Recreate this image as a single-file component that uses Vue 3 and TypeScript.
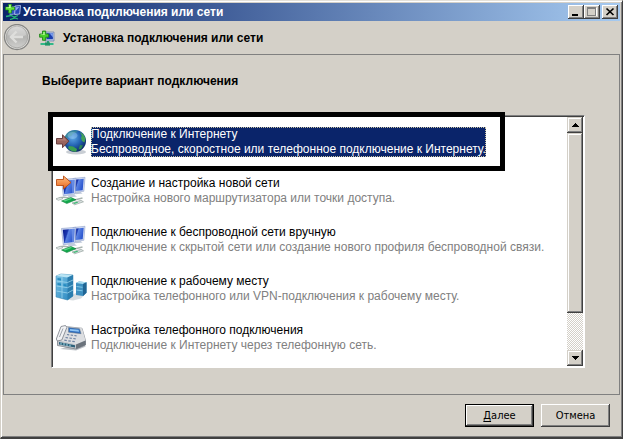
<script setup lang="ts">
import { ref } from 'vue'

interface Option {
  id: string
  icon: 'globe' | 'create' | 'wireless' | 'work' | 'phone'
  title: string
  note: string
}

const heading = 'Установка подключения или сети'

const options: Option[] = [
  { id: 'internet', icon: 'globe', title: 'Подключение к Интернету', note: 'Беспроводное, скоростное или телефонное подключение к Интернету.' },
  { id: 'network', icon: 'create', title: 'Создание и настройка новой сети', note: 'Настройка нового маршрутизатора или точки доступа.' },
  { id: 'wireless', icon: 'wireless', title: 'Подключение к беспроводной сети вручную', note: 'Подключение к скрытой сети или создание нового профиля беспроводной связи.' },
  { id: 'work', icon: 'work', title: 'Подключение к рабочему месту', note: 'Настройка телефонного или VPN-подключения к рабочему месту.' },
  { id: 'dialup', icon: 'phone', title: 'Настройка телефонного подключения', note: 'Подключение к Интернету через телефонную сеть.' },
]

const selected = ref('internet')
</script>

<template>
  <div class="window">
    <svg class="defs" width="0" height="0" aria-hidden="true">
      <defs>
        <linearGradient id="screen" x1="0" y1="0" x2="1" y2="0.4">
          <stop offset="0" stop-color="#0a1c8c" />
          <stop offset="0.4" stop-color="#1a36b0" />
          <stop offset="0.5" stop-color="#5a82e2" />
          <stop offset="1" stop-color="#2a55cf" />
        </linearGradient>
        <radialGradient id="ocean" cx="0.4" cy="0.35" r="0.65">
          <stop offset="0" stop-color="#5fa8e6" />
          <stop offset="0.55" stop-color="#2464b4" />
          <stop offset="1" stop-color="#0f2f6c" />
        </radialGradient>
        <linearGradient id="orange" x1="0" y1="0" x2="0" y2="1">
          <stop offset="0" stop-color="#ffc183" />
          <stop offset="1" stop-color="#e8641c" />
        </linearGradient>
        <linearGradient id="tower" x1="0" y1="0" x2="1" y2="1">
          <stop offset="0" stop-color="#7cc4e6" />
          <stop offset="1" stop-color="#2583bd" />
        </linearGradient>
        <linearGradient id="disc" x1="0" y1="0" x2="0" y2="1">
          <stop offset="0" stop-color="#d4d4d2" />
          <stop offset="0.5" stop-color="#b4b4b2" />
          <stop offset="1" stop-color="#cfcfcd" />
        </linearGradient>
        <symbol id="net-plus" viewBox="0 0 16 16">
          <path d="M6 2h9v9H6z" fill="#b9c7e6" stroke="#6b7ba6" stroke-width="0.7" />
          <path d="M7.5 3.2h6.4v6H7.5z" fill="#1c3fae" />
          <path d="M10.5 3.2h3.4v4z" fill="#7da0ee" />
          <path d="M8 11h2v2.5H8z" fill="#2c9c74" />
          <path d="M1.5 13h13v2h-13z" fill="#30b888" />
          <path d="M6 12.4h5v3.2H6z" fill="#1f9468" />
          <path d="M3.5 1h3.2v3h3v3.2h-3v3.1H3.5V7.200H.6V4h2.900z" fill="#4cd22c" stroke="#167d12" stroke-width="0.8" />
          <path d="M4.300 1.900h1.400v3h-4v-.3h2.600z" fill="#b8f79a" />
        </symbol>
        <symbol id="title-net" viewBox="0 0 16 16">
          <path d="M5 3l6-.5v7L5 11z" fill="#3154c4" stroke="#a9bde8" stroke-width="0.7" />
          <path d="M10 2l5.500-.5-.8 8.500-5 .5z" fill="#2647b8" stroke="#c5d3f2" stroke-width="0.8" />
          <path d="M11 3.200l3.300-.3-3.600 4z" fill="#8eadef" />
          <path d="M1 12.500l5-1 3 1.500 4-1.500M5 15.500l5-1.500 3 1" fill="none" stroke="#25b878" stroke-width="1.300" />
          <path d="M3.500 0h3v3h3v3h-3v3h-3V6h-3V3h3z" fill="#65e53c" stroke="#178318" stroke-width="0.7" />
          <path d="M4.300 1h1.200v3H1.300v-.4h3z" fill="#cfffb2" />
        </symbol>
        <symbol id="monitors" viewBox="0 0 32 32">
          <path d="M18 3.500l12-1.200-1.200 14L17 17.500z" fill="#d6dff4" stroke="#8e9fc8" stroke-width="0.6" />
          <path d="M19 4.700l9.700-1-1 11.500-9.200 1z" fill="url(#screen)" />
          <path d="M20 17l5-.6 2.500 2-7 .8z" fill="#b9c3d6" />
          <path d="M6.500 4.500L21 3.300 20 19 8.300 20.800z" fill="#d3ddf5" stroke="#8798c4" stroke-width="0.6" />
          <path d="M7.800 5.700l11.900-1-.8 13.300-9.700 1.300z" fill="url(#screen)" />
          <path d="M16.500 5l3.200-.3-.8 13.200-1.700.2z" fill="#8fb0f1" opacity="0.5" />
          <path d="M12 20l6-.9 4 2.300-8 1.200z" fill="#c1cbdc" />
          <path d="M1.500 24.500c3-2 7-3 11-1.800l7 2.300 8-2" fill="none" stroke="#a8b3b0" stroke-width="1.500" />
          <path d="M6.500 26l9.500-3.500 5 2.200-9.200 3.900z" fill="#13a64b" stroke="#087b34" stroke-width="0.5" />
          <path d="M8.500 25.600l7.200-2.500 1.400.7-7.200 2.700z" fill="#5bd487" />
          <path d="M1 23.600l5-1.300 2 1.400-4.800 1.700z" fill="#e1e7e5" stroke="#8e9b98" stroke-width="0.5" />
          <path d="M17 28l9-2.700 2.500 1.500-8.800 3z" fill="#d7dfdd" stroke="#8b9996" stroke-width="0.6" />
          <path d="M18 28l4-1.200 1.400.8-4 1.300z" fill="#41bc77" />
        </symbol>
      </defs>
    </svg>

    <header class="titlebar">
      <svg class="title-icon" aria-hidden="true"><use href="#title-net" /></svg>
      <span class="title-text">{{ heading }}</span>
      <div class="captions">
        <button type="button" class="caption" aria-label="Свернуть">
          <svg viewBox="0 0 12 10"><path d="M2 7h6v2H2z" fill="#000" /></svg>
        </button>
        <button type="button" class="caption" aria-label="Развернуть" disabled>
          <svg viewBox="0 0 12 10" shape-rendering="crispEdges">
            <path d="M2 9h9V1h-1v7H2z" fill="#fff" />
            <path d="M1 0h9v9H1zM2 2v6h7V2z" fill="#808080" fill-rule="evenodd" />
          </svg>
        </button>
        <button type="button" class="caption close" aria-label="Закрыть">
          <svg viewBox="0 0 12 10"><path d="M2.500 1.500l7 6.500M9.500 1.500l-7 6.500" stroke="#000" stroke-width="1.700" /></svg>
        </button>
      </div>
    </header>

    <div class="wizard-head">
      <button type="button" class="back" aria-label="Назад" disabled>
        <svg viewBox="0 0 28 28">
          <circle cx="14" cy="13" r="12.500" fill="#e1e0dd" stroke="#858583" stroke-width="1.300" />
          <circle cx="14" cy="13" r="10.800" fill="url(#disc)" stroke="#a2a2a0" stroke-width="0.8" />
          <path d="M5 11a9 9 0 0 1 18 0c-5 2-12 2-18 0z" fill="#e2e2e0" opacity="0.4" />
          <path d="M13.500 7.500L8 13l5.500 5.500M8.500 13H20" fill="none" stroke="#dededc" stroke-width="2.400" />
        </svg>
      </button>
      <svg class="head-icon" aria-hidden="true"><use href="#net-plus" /></svg>
      <h1>{{ heading }}</h1>
    </div>

    <main class="panel">
      <h2>Выберите вариант подключения</h2>
      <div class="listbox">
        <ul class="options">
          <li v-for="o in options" :key="o.id" :class="{ marked: o.id === 'internet' }">
            <button type="button" class="option" :class="{ selected: selected === o.id }" @click="selected = o.id">
              <svg class="option-icon" viewBox="0 0 32 32" aria-hidden="true">
                <template v-if="o.icon === 'globe'">
                  <ellipse cx="21" cy="26" rx="10" ry="2.500" fill="#c9ced4" />
                  <circle cx="20" cy="15" r="11" fill="url(#ocean)" />
                  <path d="M15 5.200c3-1.200 6-1.400 8-.4l-2 2-3 .6-1.500 2.700-3 .5-2 3-2.500-.5c.5-3.500 3-6.500 6-7.900z" fill="#3f9b83" opacity="0.5" />
                  <path d="M25 6l3.500 2.500 2 4-1 4-2.500-1.500-1-3 .8-2.200z" fill="#42a25a" />
                  <path d="M14 20l4 .5 4 2.500-.8 2.700c-3 .2-6.500-1.200-8.200-3.700z" fill="#3c9f51" />
                  <path d="M25 19l3 .5-2 3.500-2.500.5z" fill="#2f8a52" />
                  <ellipse cx="17.500" cy="9.500" rx="5" ry="3.500" fill="#b5dcfa" opacity="0.35" />
                  <path d="M1.500 12.500h6V8.800l6.500 6.400-6.500 6.500v-3.700h-6z" fill="#99655f" stroke="#5f3436" stroke-width="0.9" />
                  <path d="M2.300 13.300h6v-2.500l3.500 3.600H2.300z" fill="#bd8980" opacity="0.7" />
                </template>
                <template v-else-if="o.icon === 'create'">
                  <use href="#monitors" />
                  <path d="M1.500 4.500h7V1l7.500 6.500L8.500 14v-3.500h-7z" fill="url(#orange)" stroke="#b84c14" stroke-width="0.9" />
                </template>
                <use v-else-if="o.icon === 'wireless'" href="#monitors" />
                <template v-else-if="o.icon === 'work'">
                  <path d="M8 26l10 1.500 8-2 5-5-9-1z" fill="#ccd4d9" opacity="0.8" />
                  <path d="M21 10l3-1.500 7.500.8v10.500L28 23l-7-1z" fill="#3d8fc0" />
                  <path d="M21 10l3-1.500 7.500.8-3.500 1.700z" fill="#a9dcf0" />
                  <path d="M28 11l3.500-1.700v10.500L28 23z" fill="#216594" />
                  <path d="M21.500 13.500l6 .8M21.500 17l6 .8" stroke="#80c7e6" />
                  <path d="M1 3l5-2 12 1v21l-5.500 4L1 24z" fill="url(#tower)" stroke="#3983ad" stroke-width="0.5" />
                  <path d="M1 3l5-2 12 1-5.500 2.500z" fill="#b8e4f4" />
                  <path d="M12.500 4.500L18 2v21l-5.500 4z" fill="#2b7eaf" />
                  <path d="M1.500 8l11 1.500L18 7M1.500 13l11 1.700 5.500-2.700M1.500 18l11 2 5.500-3M7 4v21" fill="none" stroke="#a6ddf2" stroke-width="0.7" />
                  <path d="M2.500 5l3.500.5v2L2.500 7zM2.500 10l3.500.5v2l-3.500-.5zM8.500 11l3 .5v2l-3-.5z" fill="#268cc0" />
                </template>
                <template v-else>
                  <path d="M5 27l16 1.500 10-4-8-3z" fill="#bfc4c9" />
                  <path d="M2.500 18L10 4.500l17 1.800 3.500 12.200v4.500L21 27 2.500 23.500z" fill="#c3c7cd" stroke="#6e747d" stroke-width="0.7" />
                  <path d="M2.500 18L10 4.500l17 1.800 3.500 12.200L21 22.500z" fill="#dcdee1" />
                  <path d="M13.500 5.500l11 1.200 1.600 5-12.600-1.500z" fill="#2f6fc0" stroke="#68727e" stroke-width="0.5" />
                  <path d="M15 7l8.500.8.6 2-9.300-1z" fill="#8ec4f4" />
                  <path d="M6 4.500l4.500-1 1.300 2-5 12.500-4.500 1-1-2z" fill="#f2f3f5" stroke="#777c85" stroke-width="0.8" />
                  <path d="M8 6.500L4.500 15" stroke="#9ca2ab" />
                  <path d="M12 12.500l2.200.3m1.500.2l2.200.3m1.500.2l2.200.3M10.500 15.500l2.400.3m1.500.2l2.400.3m1.500.2l2.400.3M9.300 18.200l2.500.4m1.500.2l2.500.4m1.500.2l2.500.3" stroke="#6f83a2" stroke-width="1.200" />
                  <path d="M4 20l16 3.300v2.200L4 22.500z" fill="#2d6079" />
                  <path d="M6 20.600v2.200m3-1.700v2.300m3-1.700v2.400m3-1.700v2.300" stroke="#87bdd0" stroke-width="1.300" />
                  <path d="M21 22.500l9.500-4v4.500L21 27z" fill="#6b737c" />
                </template>
              </svg>
              <span class="option-text">
                <span class="option-title">{{ o.title }}</span>
                <span class="option-note">{{ o.note }}</span>
              </span>
            </button>
          </li>
        </ul>
        <div class="scrollbar">
          <button type="button" class="arrow" aria-label="Вверх">
            <svg viewBox="0 0 7 4" shape-rendering="crispEdges"><path d="M3 0h1v1h1v1h1v1h1v1H0V3h1V2h1V1h1z" /></svg>
          </button>
          <div class="track"><div class="thumb"></div></div>
          <button type="button" class="arrow" aria-label="Вниз">
            <svg viewBox="0 0 7 4" shape-rendering="crispEdges"><path d="M0 0h7v1H6v1H5v1H4v1H3V3H2V2H1V1H0z" /></svg>
          </button>
        </div>
      </div>
    </main>

    <footer class="actions">
      <button type="button" class="push default"><span class="key">Д</span>алее</button>
      <button type="button" class="push">Отмена</button>
    </footer>
  </div>
</template>

<style>
body {
  background: #d4d0c8;
}
</style>

<style scoped>
.window {
  box-sizing: border-box;
  display: flex;
  flex-direction: column;
  min-height: 100vh;
  padding: 2px 1px 0 2px;
  background: #d4d0c8;
  border-style: solid;
  border-width: 1px 1px 2px 1px;
  border-color: #e4e1da #404040 #404040 #d4d0c8;
  box-shadow: inset 1px 1px #fff, inset -1px -1px #808080;
  font-family: "Liberation Sans", sans-serif;
  font-size: 12px;
  color: #000;
}
.defs {
  position: absolute;
}
button {
  box-sizing: border-box;
  margin: 0;
  padding: 0;
  border: 0;
  color: inherit;
  font: inherit;
}
.titlebar {
  display: flex;
  align-items: center;
  height: 18px;
  padding: 0 2px;
  margin-right: 1px;
  background: linear-gradient(to right, #0a246a, #a6caf0);
  color: #fff;
}
.title-icon {
  width: 16px;
  height: 16px;
}
.title-text {
  flex: 1;
  margin-left: 2px;
  font-weight: bold;
  line-height: 18px;
}
.captions {
  display: flex;
}
.caption {
  display: flex;
  align-items: center;
  justify-content: center;
  width: 16px;
  height: 14px;
  background: #d4d0c8;
  box-shadow: inset -1px -1px #404040, inset 1px 1px #fff, inset -2px -2px #808080;
}
.close {
  margin-left: 2px;
}
.caption svg {
  width: 12px;
  height: 10px;
}
.wizard-head {
  display: flex;
  align-items: center;
  height: 33px;
}
.back {
  width: 28px;
  height: 28px;
  background: none;
}
.back svg {
  display: block;
}
.head-icon {
  width: 16px;
  height: 16px;
  margin-left: 8px;
}
h1,
h2 {
  margin: 0;
  font-size: 12px;
  font-weight: bold;
  line-height: 16px;
}
h1 {
  margin-left: 8px;
}
.panel {
  display: flex;
  flex: 1;
  flex-direction: column;
  padding: 18px 34px 26px 47px;
  margin-right: 1px;
  border: 1px solid #808080;
}
h2 {
  margin-left: -9px;
}
.listbox {
  display: flex;
  flex: 1;
  margin-top: 26px;
  background: #fff;
  border: 1px solid;
  border-color: #808080 #fff #fff #808080;
  box-shadow: inset 1px 1px #404040;
  padding: 1px;
}
.options {
  display: flex;
  flex: 1;
  flex-direction: column;
  gap: 19px;
  min-width: 0;
  margin: 0;
  padding: 10px 0 12px 2px;
  list-style: none;
}
.options li {
  position: relative;
}
.marked::after {
  content: "";
  position: absolute;
  inset: -15px 62px -14px -7px;
  border: 5px solid #000;
  pointer-events: none;
}
.option {
  display: flex;
  align-items: center;
  gap: 4px;
  height: 30px;
  background: none;
  text-align: left;
  white-space: nowrap;
}
.option-icon {
  flex: none;
  width: 32px;
  height: 32px;
}
.option-text {
  display: flex;
  flex-direction: column;
  line-height: 15px;
}
.option-note {
  color: #808080;
}
.selected .option-text {
  background: #0a246a;
  outline: 1px dotted #c8c2a0;
  outline-offset: -1px;
  color: #fff;
}
.selected .option-note {
  color: #fff;
}
.scrollbar {
  display: flex;
  flex-direction: column;
  width: 16px;
}
.arrow,
.thumb {
  background: #d4d0c8;
  box-shadow: inset -1px -1px #404040, inset 1px 1px #d4d0c8, inset -2px -2px #808080, inset 2px 2px #fff;
}
.arrow {
  display: flex;
  flex: none;
  align-items: center;
  justify-content: center;
  height: 16px;
}
.arrow svg {
  width: 7px;
  height: 4px;
}
.track {
  flex: 1;
  background: repeating-conic-gradient(#d4d0c8 0 25%, #fff 0 50%) 0 0 / 2px 2px;
}
.thumb {
  height: 83%;
}
.actions {
  display: flex;
  justify-content: flex-end;
  gap: 7px;
  padding: 9px 11px 10px;
}
.push {
  width: 69px;
  height: 23px;
  background: #d4d0c8;
  box-shadow: inset -1px -1px #404040, inset 1px 1px #fff, inset -2px -2px #808080;
  font-family: "DejaVu Sans Condensed", "DejaVu Sans", sans-serif;
  font-size: 11px;
  font-stretch: condensed;
  line-height: 15px;
}
.default {
  border: 1px solid #000;
}
.key {
  text-decoration: underline;
  text-decoration-skip-ink: none;
  text-underline-offset: 2px;
}
</style>
